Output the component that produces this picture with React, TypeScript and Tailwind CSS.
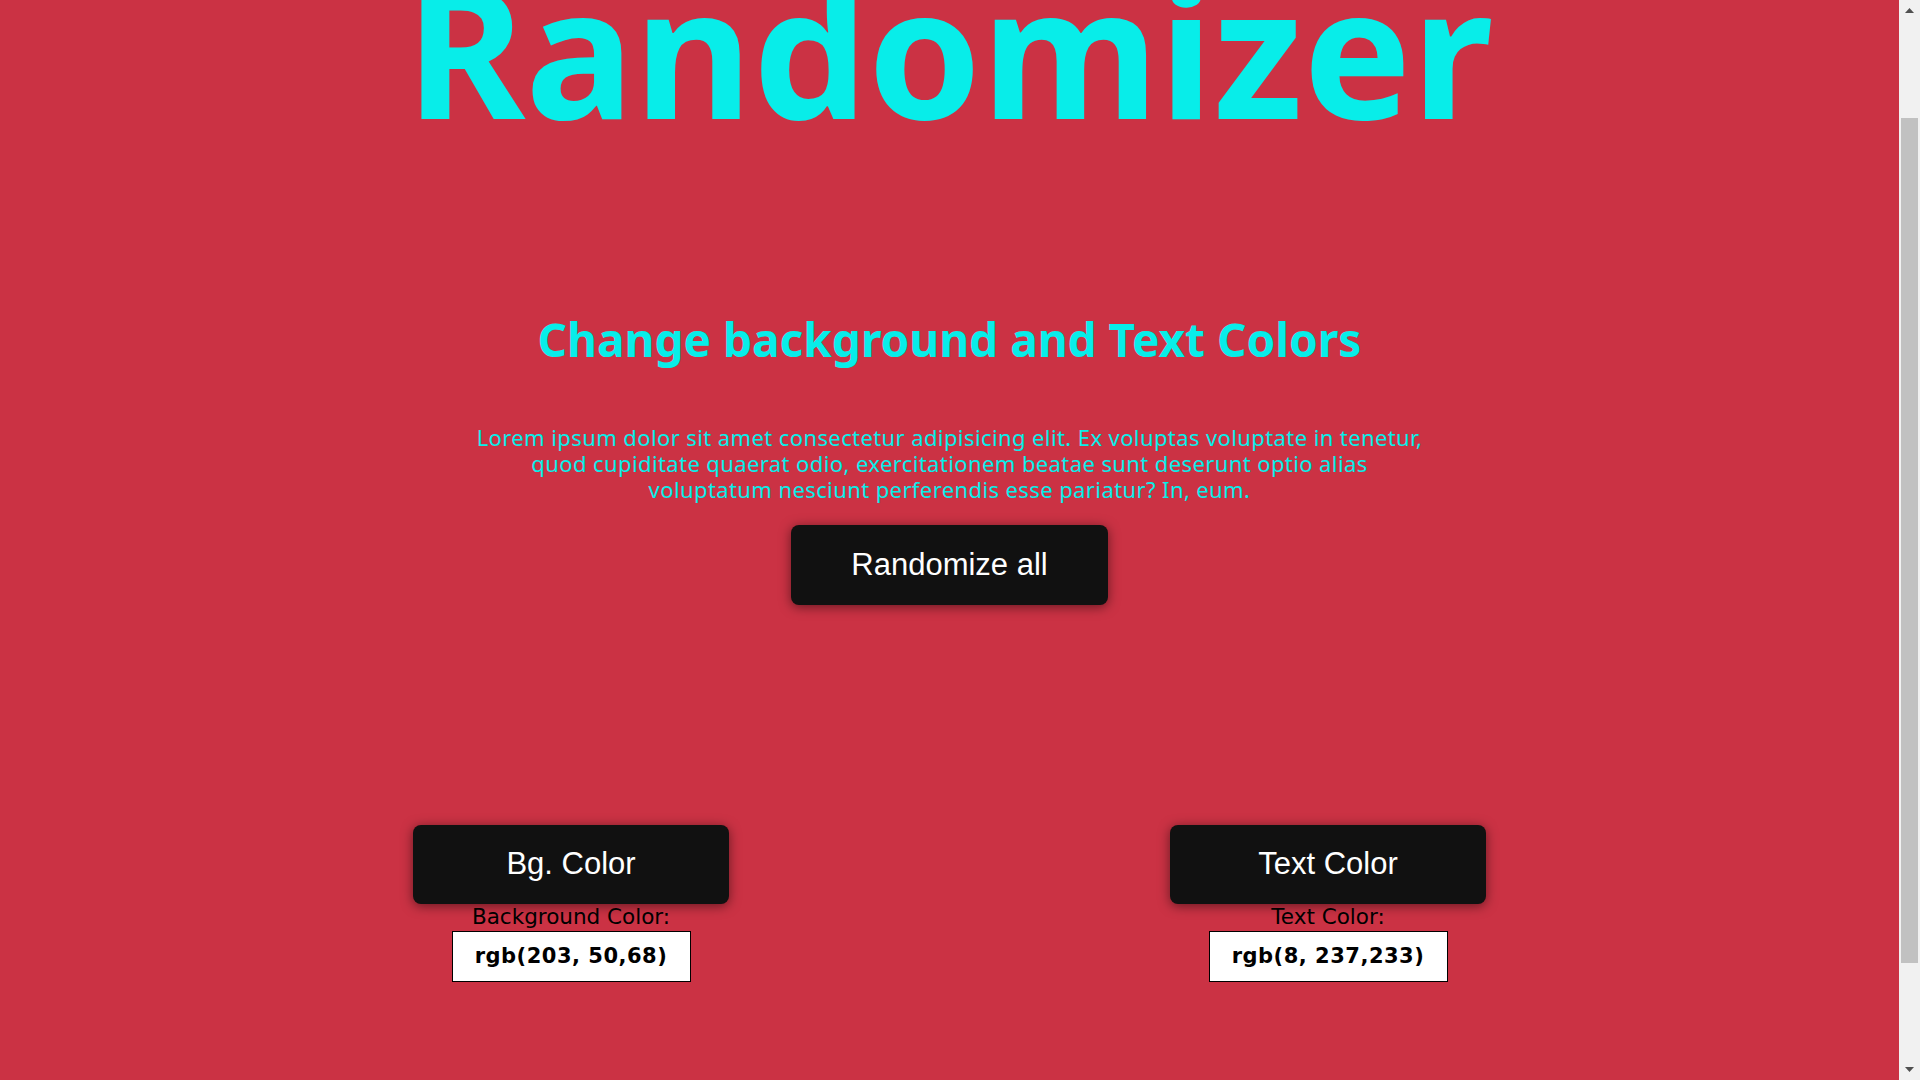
type SwatchProps = {
  button: string;
  label: string;
  value: string;
};

function Swatch({ button, label, value }: SwatchProps) {
  return (
    <div className="flex flex-col items-center">
      <button
        type="button"
        className="h-[79px] w-[316px] rounded-lg bg-[#111111] font-['Liberation_Sans',Arial,sans-serif] text-[31px] text-white shadow-[0_2px_12px_rgba(0,0,0,0.5)]"
      >
        {button}
      </button>
      <p className="font-['DejaVu_Sans',sans-serif] text-[21.5px] leading-[25px] text-black">
        {label}
      </p>
      <div className="mt-[2px] flex h-[51px] w-[239px] items-center justify-center border border-black bg-white font-['DejaVu_Sans',sans-serif] text-[21px] font-bold tracking-[0.5px] text-black">
        {value}
      </div>
    </div>
  );
}

function Scrollbar() {
  return (
    <div className="flex w-[21px] shrink-0 flex-col bg-[#f1f1f1]">
      <div className="flex h-[21px] items-center justify-center">
        <svg width="9" height="5" viewBox="0 0 9 5">
          <path d="M4.5 0 L9 5 L0 5 Z" fill="#505050" />
        </svg>
      </div>
      <div className="flex-1 px-[2px] pt-[97px]">
        <div className="h-[845px] bg-[#c1c1c1]" />
      </div>
      <div className="flex h-[21px] items-center justify-center">
        <svg width="9" height="5" viewBox="0 0 9 5">
          <path d="M0 0 L9 0 L4.5 5 Z" fill="#505050" />
        </svg>
      </div>
    </div>
  );
}

export default function App() {
  return (
    <div className="flex h-screen overflow-hidden bg-[#cb3244]">
      <main className="flex min-w-0 flex-1 flex-col items-center font-['Noto_Sans',sans-serif] text-[#08ede9]">
        <h1 className="-mt-[43px] text-[182px] font-bold leading-none">Randomizer</h1>

        <h2 className="mt-[177px] text-[46px] font-bold leading-none">
          Change background and Text Colors
        </h2>

        <p className="mt-[62px] text-center text-[22px] leading-[26px] tracking-[0.4px]">
          Lorem ipsum dolor sit amet consectetur adipisicing elit. Ex voluptas voluptate in tenetur,
          <br />
          quod cupiditate quaerat odio, exercitationem beatae sunt deserunt optio alias
          <br />
          voluptatum nesciunt perferendis esse pariatur? In, eum.
        </p>

        <button
          type="button"
          className="mt-[23px] h-[80px] w-[317px] rounded-lg bg-[#111111] font-['Liberation_Sans',Arial,sans-serif] text-[31px] text-white shadow-[0_2px_12px_rgba(0,0,0,0.5)]"
        >
          Randomize all
        </button>

        <div className="mt-[220px] grid w-[1514px] grid-cols-2">
          <Swatch button="Bg. Color" label="Background Color:" value="rgb(203, 50,68)" />
          <Swatch button="Text Color" label="Text Color:" value="rgb(8, 237,233)" />
        </div>
      </main>
      <Scrollbar />
    </div>
  );
}
